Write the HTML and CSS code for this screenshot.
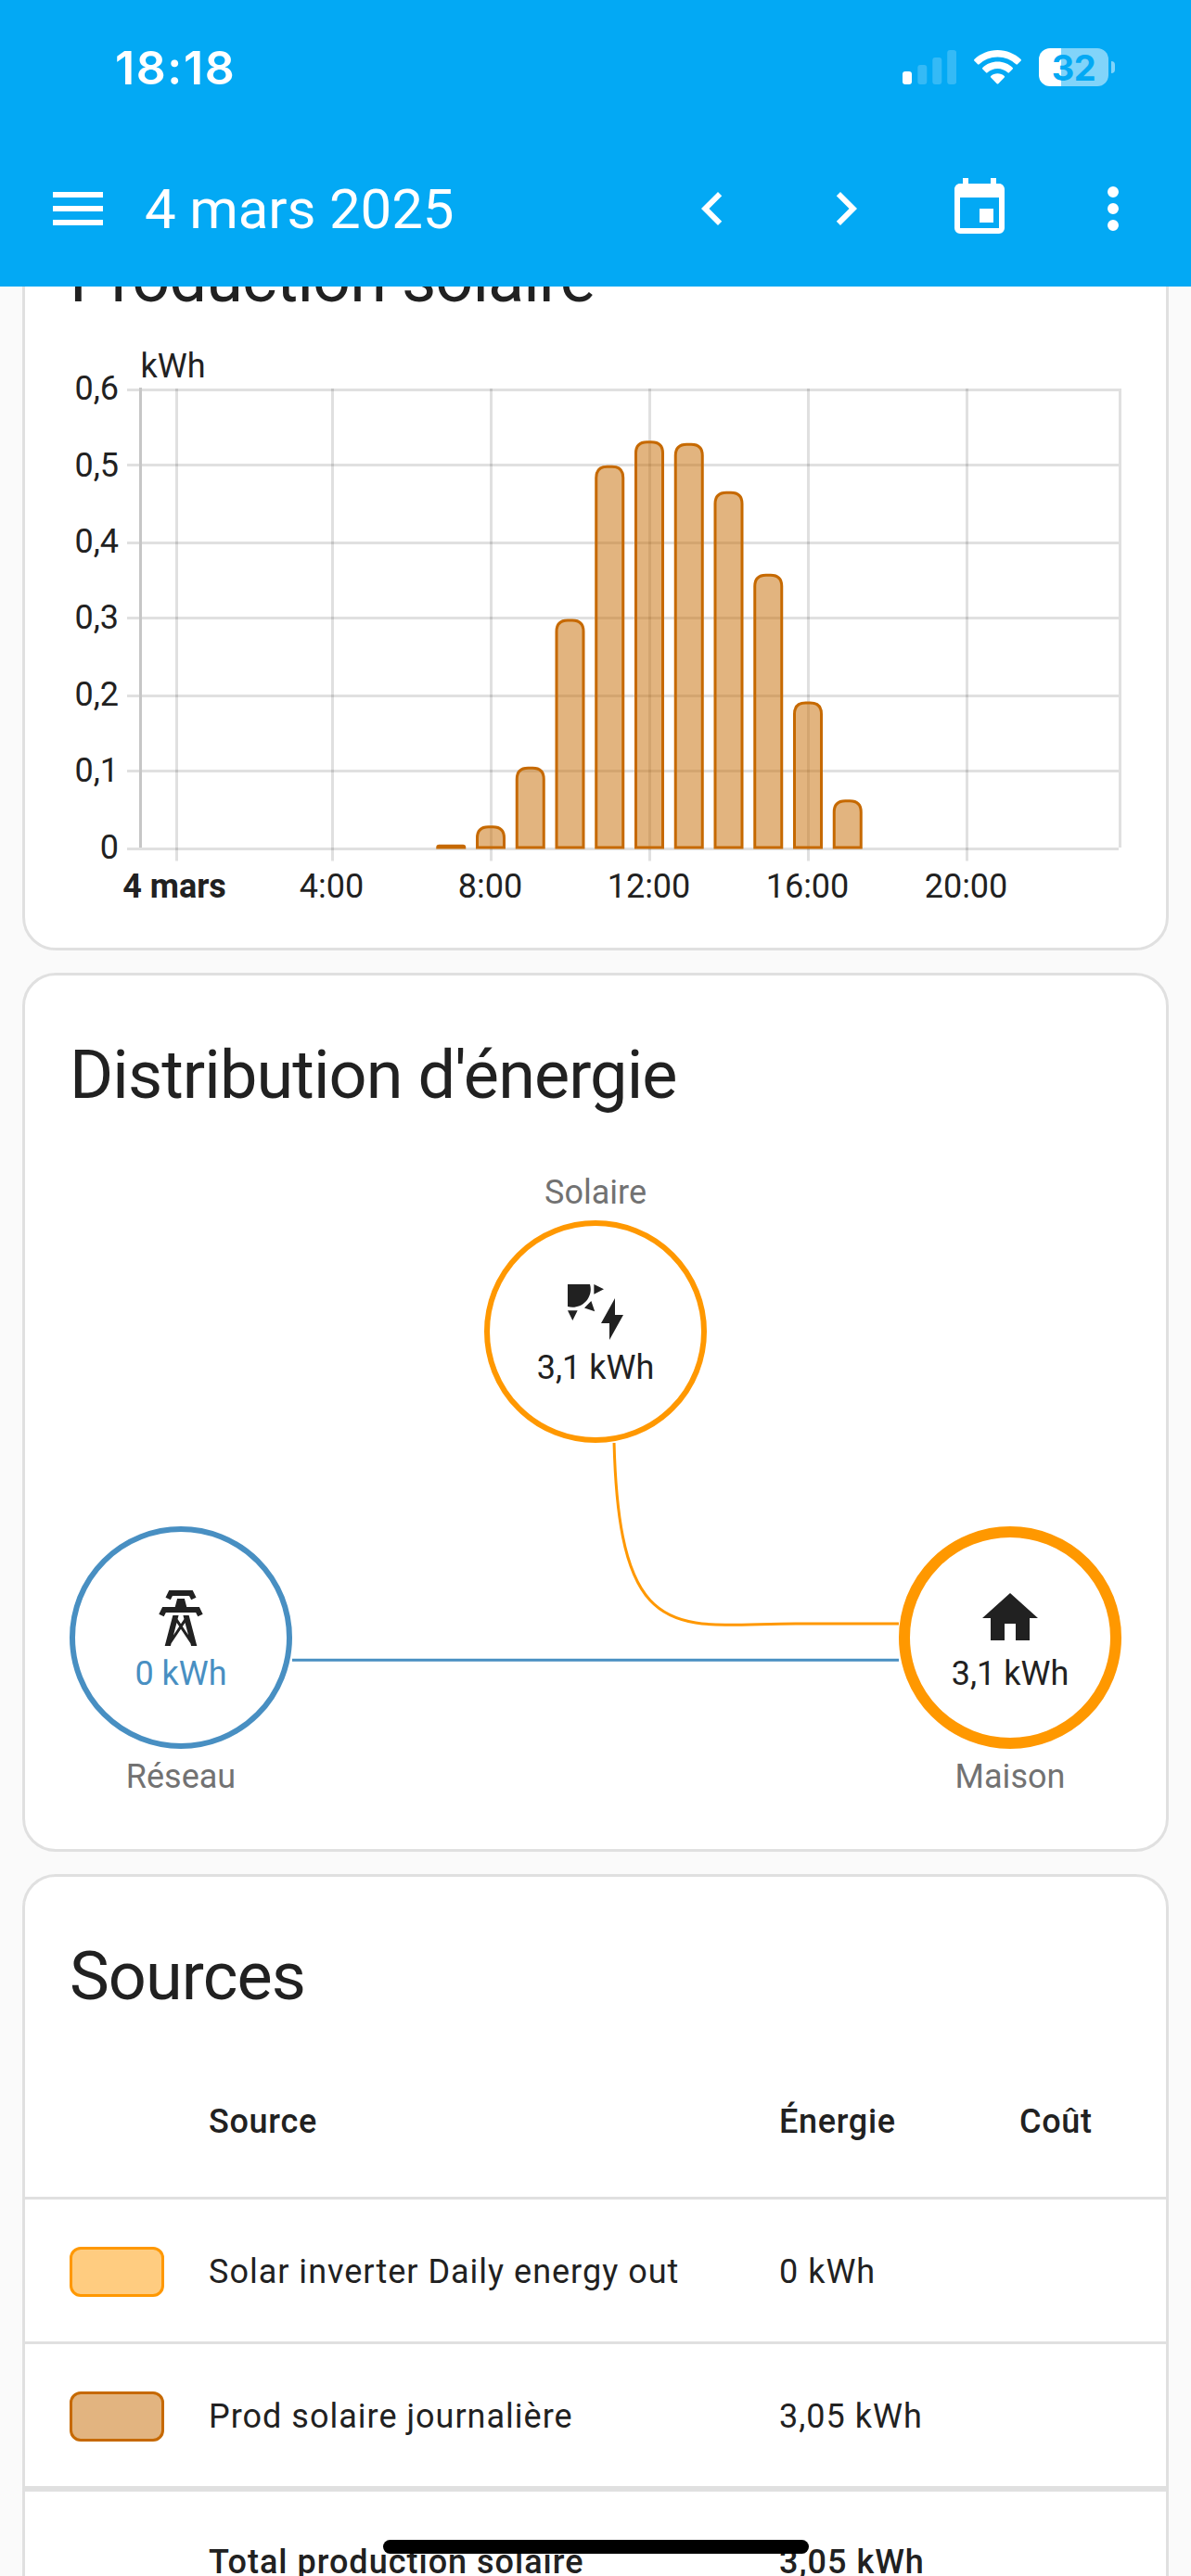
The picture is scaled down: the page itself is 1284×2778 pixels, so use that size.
FILE: index.html
```html
<!DOCTYPE html>
<html lang="fr">

<head>
    <meta charset="utf-8">
    <meta name="viewport" content="width=device-width, initial-scale=1.0">
    <title>Énergie</title>
    <link rel="stylesheet" href="styles.css">
</head>

<body>
    <header>
        <div class="status-bar">
            <span class="time">18:18</span>
            <div class="status-icons">
                <svg class="signal" width="58" height="37" viewBox="0 0 58 37">
                    <rect x="0" y="23" width="10" height="14" rx="3" />
                    <rect class="off" x="16.3" y="16" width="10" height="21" rx="3" />
                    <rect class="off" x="32.3" y="8" width="10" height="29" rx="3" />
                    <rect class="off" x="48.2" y="0" width="10" height="37" rx="3" />
                </svg>
                <svg class="wifi" width="51" height="37" viewBox="0 0 51 37">
                    <path d="M25.5,0C35.2,0 44.1,3.8 50.6,10.1C51.1,10.6 51.1,11.1 50.7,11.5L46.9,15.3C46.4,15.8 45.9,15.8 45.4,15.3C40.2,10.4 33.2,7.4 25.5,7.4C17.8,7.4 10.8,10.4 5.6,15.3C5.1,15.8 4.6,15.8 4.1,15.3L0.3,11.5C-0.1,11.1 -0.1,10.6 0.4,10.1C6.9,3.8 15.8,0 25.5,0Z" />
                    <path d="M25.5,12.6C31.7,12.6 37.4,15 41.7,19C42.2,19.5 42.2,20 41.7,20.5L37.9,24.3C37.4,24.8 36.9,24.7 36.5,24.3C33.6,21.7 29.7,20.1 25.5,20.1C21.3,20.1 17.4,21.7 14.5,24.3C14.1,24.7 13.6,24.8 13.1,24.3L9.3,20.5C8.8,20 8.8,19.5 9.3,19C13.6,15 19.3,12.6 25.5,12.6Z" />
                    <path d="M25.5,25.2C28.3,25.2 30.8,26.2 32.8,27.9C33.3,28.4 33.3,28.9 32.8,29.4L26.3,36.2C25.8,36.7 25.2,36.7 24.7,36.2L18.2,29.4C17.7,28.9 17.7,28.4 18.2,27.9C20.2,26.2 22.7,25.2 25.5,25.2Z" />
                </svg>
                <div class="battery"><span>32</span></div>
            </div>
        </div>
        <div class="toolbar">
            <svg class="icon" viewBox="0 0 24 24"><path d="M3,6H21V8H3V6M3,11H21V13H3V11M3,16H21V18H3V16Z" /></svg>
            <h1>4 mars 2025</h1>
            <svg class="icon" viewBox="0 0 24 24"><path d="M15.41,16.58L10.83,12L15.41,7.41L14,6L8,12L14,18L15.41,16.58Z" /></svg>
            <svg class="icon" viewBox="0 0 24 24"><path d="M8.59,16.58L13.17,12L8.59,7.41L10,6L16,12L10,18L8.59,16.58Z" /></svg>
            <svg class="icon" viewBox="0 0 24 24"><path d="M19,19H5V8H19M16,1V3H8V1H6V3H5C3.89,3 3,3.89 3,5V19A2,2 0 0,0 5,21H19A2,2 0 0,0 21,19V5C21,3.89 20.1,3 19,3H18V1M17,12H12V17H17V12Z" /></svg>
            <svg class="icon" viewBox="0 0 24 24"><path d="M12,16A2,2 0 0,1 14,18A2,2 0 0,1 12,20A2,2 0 0,1 10,18A2,2 0 0,1 12,16M12,10A2,2 0 0,1 14,12A2,2 0 0,1 12,14A2,2 0 0,1 10,12A2,2 0 0,1 12,10M12,4A2,2 0 0,1 14,6A2,2 0 0,1 12,8A2,2 0 0,1 10,6A2,2 0 0,1 12,4Z" /></svg>
        </div>
    </header>

    <main>
        <section class="card">
            <h2>Production solaire</h2>
            <svg id="chart" width="1230" height="649" viewBox="0 0 1230 649"></svg>
        </section>

        <section class="card">
            <h2>Distribution d'énergie</h2>
            <div class="distribution">
                <div class="row center">
                    <div class="node solar">
                        <span class="label">Solaire</span>
                        <div class="circle">
                            <svg class="icon" viewBox="0 0 24 24"><path d="M11.45,2V5.55L15,3.77L11.45,2M10.45,8L8,10.46L11.75,11.71L10.45,8M2,11.45L3.77,15L5.55,11.45H2M10,2H2V10C2.57,10.17 3.17,10.25 3.77,10.25C7.35,10.26 10.26,7.35 10.27,3.75C10.26,3.16 10.17,2.57 10,2M17,22V16H14L19,7V13H22L17,22Z" /></svg>
                            <span>3,1 kWh</span>
                        </div>
                    </div>
                </div>
                <div class="row">
                    <div class="node grid">
                        <div class="circle">
                            <svg class="icon" viewBox="0 0 24 24"><path d="M8.28,5.45L6.5,4.55L7.76,2H16.23L17.5,4.55L15.72,5.44L15,4H9L8.28,5.45M18.62,8H14.09L13.3,5H10.7L9.91,8H5.38L4.1,10.55L5.89,11.44L6.62,10H17.38L18.1,11.45L19.89,10.56L18.62,8M17.77,22H15.7L15.46,21.1L12,15.9L8.53,21.1L8.3,22H6.23L9.12,11H11.19L10.83,12.35L12,14.1L13.16,12.35L12.81,11H14.88L17.77,22M11.4,15L10.5,13.65L9.32,18.13L11.4,15M14.68,18.12L13.5,13.64L12.6,15L14.68,18.12Z" /></svg>
                            <span>0 kWh</span>
                        </div>
                        <span class="label">Réseau</span>
                    </div>
                    <div class="node home">
                        <div class="circle">
                            <svg class="icon" viewBox="0 0 24 24"><path d="M10,20V14H14V20H19V12H22L12,3L2,12H5V20H10Z" /></svg>
                            <span>3,1 kWh</span>
                        </div>
                        <span class="label">Maison</span>
                    </div>
                </div>
                <!-- Flow lines between the circles -->
                <svg class="lines" width="654" height="262" viewBox="0 20.18 100 40.06">
                    <path class="line-grid" d="M0,56 H100" />
                    <path class="line-solar" d="M53,0 v15 c0,40 10,35 30,35 h25" />
                </svg>
            </div>
        </section>

        <section class="card">
            <h2>Sources</h2>
            <div class="table">
                <div class="table-row head">
                    <span></span>
                    <span>Source</span>
                    <span>Énergie</span>
                    <span>Coût</span>
                </div>
                <div class="table-row">
                    <span class="bullet inverter"></span>
                    <span>Solar inverter Daily energy out</span>
                    <span>0 kWh</span>
                </div>
                <div class="table-row">
                    <span class="bullet prod"></span>
                    <span>Prod solaire journalière</span>
                    <span>3,05 kWh</span>
                </div>
                <div class="table-row total">
                    <span></span>
                    <span>Total production solaire</span>
                    <span>3,05 kWh</span>
                </div>
            </div>
        </section>
    </main>

    <div class="home-indicator"></div>

    <script>
        const chart = document.getElementById('chart');

        // kWh per hour of the day
        const production = {
            7: 0.002, 8: 0.027, 9: 0.104, 10: 0.297, 11: 0.498, 12: 0.53,
            13: 0.527, 14: 0.464, 15: 0.356, 16: 0.189, 17: 0.061
        };

        const left = 124.5;
        const right = 1180.5;
        const top0 = 47.5;
        const bottom = 542.5;
        const hourX = h => 160 + h * 42.75;

        function add(tag, attrs, text) {
            const el = document.createElementNS('http://www.w3.org/2000/svg', tag);
            for (const key in attrs) el.setAttribute(key, attrs[key]);
            if (text) el.textContent = text;
            chart.appendChild(el);
        }

        // Horizontal grid, snapped to 3px steps
        for (let i = 0; i <= 6; i++) {
            const y = bottom - Math.round(i * 27.5) * 3;
            add('path', { class: 'grid-line', d: `M${left - 14.5},${y} H${right - 1.5}` });
            add('text', { class: 'tick', x: 101, y: 552.5 - i * 82.4, 'text-anchor': 'end' },
                i === 0 ? '0' : '0,' + i);
        }

        // Vertical grid
        for (let h = 0; h <= 20; h += 4) {
            const x = h === 0 ? 163.5 : Math.round(hourX(h)) + 0.5;
            add('path', { class: 'grid-line', d: `M${x},${top0 - 1.5} V555.5` });
            add('text', { class: h === 0 ? 'tick bold' : 'tick', x: h === 0 ? 161 : hourX(h) - 0.5, y: 594.5, 'text-anchor': 'middle' },
                h === 0 ? '4 mars' : h + ':00');
        }
        add('path', { class: 'grid-line', d: `M${right},${top0 - 1.5} V541` });
        add('path', { class: 'axis-line', d: `M${left},45 V541` });
        add('text', { class: 'tick', x: 124.5, y: 34 }, 'kWh');

        // Bars
        for (const h in production) {
            const height = production[h] * 825;
            const r = Math.min(12, height);
            const x = hourX(Number(h)) - 14.5;
            add('path', {
                class: 'bar',
                d: `M${x},541 v${-(height - r)} q0,${-r} ${r},${-r} h${29 - 2 * r} q${r},0 ${r},${r} v${height - r} Z`
            });
        }
    </script>
</body>

</html>
```

FILE: styles.css
```css
* {
    box-sizing: border-box;
}

body {
    margin: 0;
    width: 1284px;
    height: 2778px;
    overflow: hidden;
    background: #fafafa;
    color: #212121;
    font-family: Roboto, "Liberation Sans", sans-serif;
    font-size: 36px;
}

h1,
h2 {
    margin: 0;
    font-weight: 400;
}

.icon {
    width: 72px;
    height: 72px;
    fill: currentColor;
    flex: none;
}

/* Header */
header {
    position: relative;
    z-index: 1;
    height: 309px;
    background: #03a9f4;
    color: #fff;
}

.status-bar {
    display: flex;
    justify-content: space-between;
    height: 141px;
    padding: 52px 82px 0 124px;
}

.time {
    font: 600 50px/41px Inter, sans-serif;
    letter-spacing: 1.6px;
    padding-top: 1px;
}

.status-icons {
    display: flex;
    align-items: flex-start;
    fill: #fff;
}

.signal,
.wifi {
    margin-top: 2px;
}

.signal .off {
    opacity: 0.2;
}

.wifi {
    margin: 2px 19px 0;
}

.battery {
    position: relative;
    width: 75px;
    height: 41px;
    margin-right: 7px;
    border-radius: 12px;
    background: linear-gradient(90deg, #fff 24px, rgba(255, 255, 255, 0.5) 24px);
    color: #03a9f4;
    font: 700 38px/42px Inter, sans-serif;
    letter-spacing: -0.5px;
    text-align: center;
}

.battery::after {
    content: "";
    position: absolute;
    left: 78px;
    top: 14px;
    width: 4px;
    height: 13px;
    border-radius: 0 4px 4px 0;
    background: rgba(255, 255, 255, 0.5);
}

.toolbar {
    display: flex;
    align-items: center;
    gap: 72px;
    height: 168px;
    padding: 0 48px;
}

.toolbar h1 {
    flex: 1;
    margin-left: -36px;
    font-size: 60px;
    letter-spacing: -0.15px;
}

/* Cards */
main {
    display: flex;
    flex-direction: column;
    gap: 24px;
    margin-top: -119px;
    padding: 0 24px;
}

.card {
    border: 3px solid #e0e0e0;
    border-radius: 36px;
    background: #fff;
}

.card h2 {
    padding: 36px 48px 0;
    font-size: 72px;
    line-height: 144px;
    letter-spacing: -0.9px;
}

#chart {
    display: block;
}

.tick {
    fill: #212121;
}

.bold {
    font-weight: 700;
}

.grid-line,
.axis-line {
    stroke: rgba(0, 0, 0, 0.12);
    stroke-width: 3;
}

.axis-line {
    stroke: #c6c6c6;
}

.bar {
    fill: rgba(198, 105, 0, 0.5);
    stroke: #c66900;
    stroke-width: 3;
}

/* Distribution */
.distribution {
    position: relative;
    padding: 36px 48px 60px;
}

.row {
    display: flex;
    justify-content: space-between;
}

.row.center {
    justify-content: center;
    margin-bottom: 90px;
}

.node {
    display: flex;
    flex-direction: column;
    gap: 12px;
    width: 240px;
    line-height: 36px;
    text-align: center;
}

.label {
    color: #727272;
}

.circle {
    display: flex;
    flex-direction: column;
    align-items: center;
    height: 240px;
    padding-top: 57px;
    border: 6px solid #ff9800;
    border-radius: 50%;
}

.circle span {
    margin-top: 6px;
}

.grid .circle {
    border-color: #488fc2;
}

.grid .circle span {
    color: #488fc2;
}

.home .circle {
    padding-top: 51px;
    border-width: 12px;
}

.lines {
    position: absolute;
    left: 288px;
    top: 324px;
    fill: none;
    overflow: hidden;
}

.lines path {
    stroke-width: 3;
    vector-effect: non-scaling-stroke;
}

.line-grid {
    stroke: #488fc2;
}

.line-solar {
    stroke: #ff9800;
}

/* Sources */
.table-row {
    display: grid;
    grid-template-columns: 150px 615px 259px 1fr;
    align-items: center;
    height: 156px;
    padding: 0 0 0 48px;
    border-bottom: 3px solid #e0e0e0;
    letter-spacing: 1px;
}

.table-row span {
    position: relative;
    top: 1px;
}

.head {
    height: 168px;
    font-weight: 500;
    letter-spacing: 0.7px;
}

.total {
    border-top: 3px solid #e0e0e0;
    font-weight: 500;
}

.bullet {
    width: 102px;
    height: 54px;
    border: 3px solid #ff9800;
    border-radius: 12px;
    background: #ffcc80;
}

.bullet.prod {
    border-color: #c66900;
    background: #e2b480;
}

.home-indicator {
    position: absolute;
    left: 413px;
    top: 2739px;
    width: 459px;
    height: 15px;
    border-radius: 8px;
    background: #000;
}
```
